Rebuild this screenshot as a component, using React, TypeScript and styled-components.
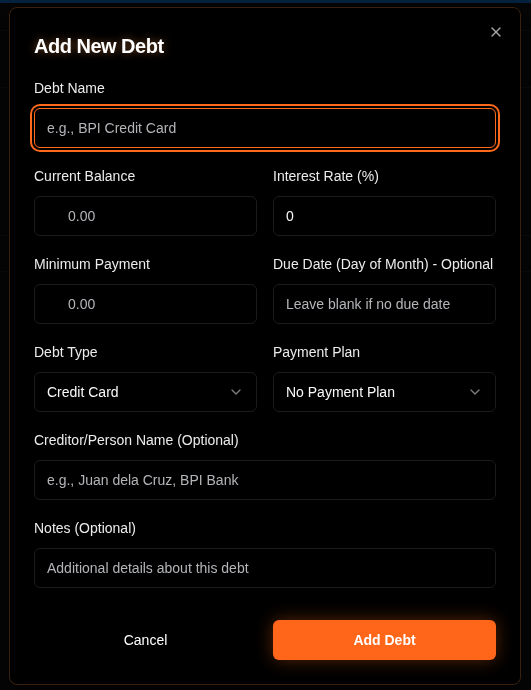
import React from "react";
import styled, { createGlobalStyle } from "styled-components";
import { X, ChevronDown } from "lucide-react";

const Global = createGlobalStyle`
  html, body { margin: 0; padding: 0; background: #0c0c0c; }
  body { font-family: "Liberation Sans", Arial, sans-serif; color: #fafafa; }
  * { box-sizing: border-box; }
`;

const Page = styled.div`
  min-height: 690px;
  background: #0c0c0c;
`;

const TopBar = styled.div`
  height: 3px;
  background: #0b4f8f;
`;

const PageRow = styled.div<{ $h: number }>`
  height: ${(p) => p.$h}px;
  border-bottom: 1px solid #1a1a1a;
`;

const Overlay = styled.div`
  position: fixed;
  inset: 0;
  background: rgba(0, 0, 0, 0.55);
`;

const Dialog = styled.div`
  position: fixed;
  left: calc(50% - 256.5px);
  top: 7px;
  width: 512px;
  background: #000;
  border: 1px solid #3a220f;
  border-radius: 8px;
  padding: 24px;
  box-shadow: 0 10px 30px rgba(0, 0, 0, 0.6);
  display: flex;
  flex-direction: column;
  gap: 18px;
`;

const CloseButton = styled.button`
  position: absolute;
  top: 16px;
  right: 16px;
  width: 16px;
  height: 16px;
  padding: 0;
  border: none;
  background: transparent;
  color: #d4d4d4;
  opacity: 0.8;
  display: flex;
  align-items: center;
  justify-content: center;
  cursor: pointer;
`;

const Title = styled.h2`
  margin: 0;
  font-size: 20px;
  line-height: 28px;
  font-weight: 700;
  letter-spacing: -0.5px;
  color: #ffffff;
  text-shadow: 0 0 8px rgba(255, 150, 70, 0.45);
`;

const Row = styled.div`
  display: grid;
  grid-template-columns: 1fr 1fr;
  gap: 16px;
`;

const Field = styled.div`
  display: flex;
  flex-direction: column;
  gap: 10px;
`;

const Label = styled.label`
  font-size: 14px;
  line-height: 20px;
  color: #ececec;
  white-space: nowrap;
`;

const Input = styled.input<{ $focused?: boolean; $pad?: number }>`
  height: 40px;
  width: 100%;
  padding: 0 12px 0 ${(p) => p.$pad ?? 12}px;
  font-family: "Liberation Sans", Arial, sans-serif;
  font-size: 14px;
  color: #fafafa;
  background: #000;
  border: 1px solid ${(p) => (p.$focused ? "#ff6a1a" : "#1b1b1b")};
  border-radius: 6px;
  outline: none;
  box-shadow: ${(p) =>
    p.$focused ? "0 0 0 2px #000, 0 0 0 4px #ff6a1a" : "none"};
  &::placeholder {
    color: #b3b5b9;
  }
`;

const Select = styled.button`
  height: 40px;
  width: 100%;
  padding: 0 12px;
  display: flex;
  align-items: center;
  justify-content: space-between;
  font-family: "Liberation Sans", Arial, sans-serif;
  font-size: 14px;
  color: #fafafa;
  background: #000;
  border: 1px solid #1b1b1b;
  border-radius: 6px;
  cursor: pointer;
  svg {
    opacity: 0.5;
  }
`;

const Footer = styled.div`
  display: grid;
  grid-template-columns: 1fr 1fr;
  gap: 16px;
  margin-top: 14px;
`;

const Button = styled.button<{ $primary?: boolean }>`
  height: 40px;
  border-radius: 6px;
  border: none;
  font-family: "Liberation Sans", Arial, sans-serif;
  font-size: 14px;
  font-weight: ${(p) => (p.$primary ? 700 : 400)};
  color: #fff;
  background: ${(p) => (p.$primary ? "#ff661a" : "transparent")};
  box-shadow: ${(p) =>
    p.$primary ? "0 0 18px rgba(255, 102, 26, 0.35)" : "none"};
  cursor: pointer;
`;

export default function App() {
  return (
    <>
      <Global />
      <Page>
        <TopBar />
        <PageRow $h={28} />
        <PageRow $h={57} />
        <PageRow $h={148} />
        <PageRow $h={36} />
      </Page>
      <Overlay />
      <Dialog role="dialog">
        <CloseButton aria-label="Close">
          <X size={16} strokeWidth={2} />
        </CloseButton>
        <Title>Add New Debt</Title>

        <Field>
          <Label>Debt Name</Label>
          <Input $focused placeholder="e.g., BPI Credit Card" />
        </Field>

        <Row>
          <Field>
            <Label>Current Balance</Label>
            <Input $pad={33} placeholder="0.00" />
          </Field>
          <Field>
            <Label>Interest Rate (%)</Label>
            <Input defaultValue="0" />
          </Field>
        </Row>

        <Row>
          <Field>
            <Label>Minimum Payment</Label>
            <Input $pad={33} placeholder="0.00" />
          </Field>
          <Field>
            <Label>Due Date (Day of Month) - Optional</Label>
            <Input placeholder="Leave blank if no due date" />
          </Field>
        </Row>

        <Row>
          <Field>
            <Label>Debt Type</Label>
            <Select>
              <span>Credit Card</span>
              <ChevronDown size={16} />
            </Select>
          </Field>
          <Field>
            <Label>Payment Plan</Label>
            <Select>
              <span>No Payment Plan</span>
              <ChevronDown size={16} />
            </Select>
          </Field>
        </Row>

        <Field>
          <Label>Creditor/Person Name (Optional)</Label>
          <Input placeholder="e.g., Juan dela Cruz, BPI Bank" />
        </Field>

        <Field>
          <Label>Notes (Optional)</Label>
          <Input placeholder="Additional details about this debt" />
        </Field>

        <Footer>
          <Button>Cancel</Button>
          <Button $primary>Add Debt</Button>
        </Footer>
      </Dialog>
    </>
  );
}
